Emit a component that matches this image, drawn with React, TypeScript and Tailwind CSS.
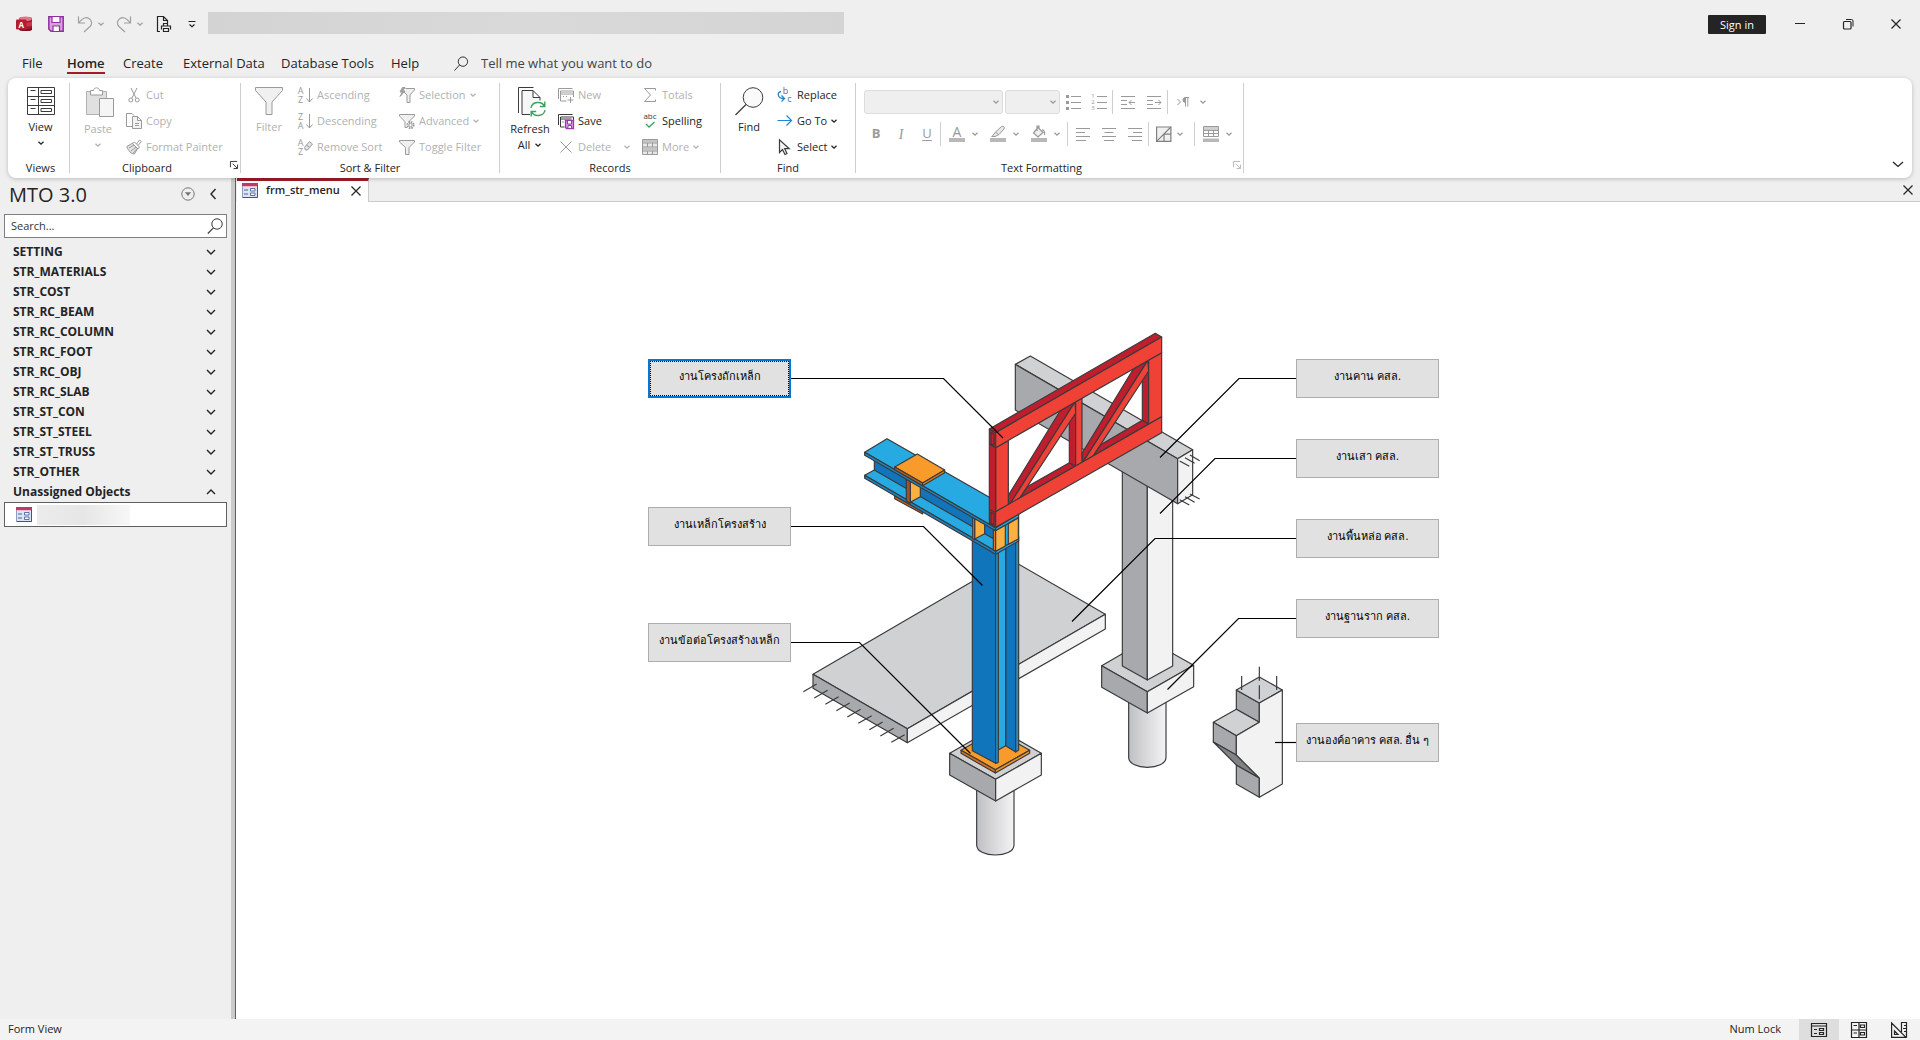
import type { ReactNode } from "react";

type IconProps = { children: ReactNode; size?: string; box?: string };

function Icon({ children, size = "h-4 w-4", box = "0 0 16 16" }: IconProps) {
  return (
    <svg viewBox={box} className={`shrink-0 overflow-visible ${size}`} fill="none" stroke="currentColor" strokeWidth="1" aria-hidden="true">
      {children}
    </svg>
  );
}

function Letter({ x, y, size = 9, fill = "currentColor", children }: { x: number; y: number; size?: number; fill?: string; children: string }) {
  return (
    <text x={x} y={y} textAnchor="middle" fontSize={size} fill={fill} stroke="none">
      {children}
    </text>
  );
}

function Caret({ className = "" }: { className?: string }) {
  return (
    <svg viewBox="0 0 8 8" className={`h-2 w-2 shrink-0 ${className}`} fill="none" stroke="currentColor" strokeWidth="1.3" aria-hidden="true">
      <path d="M1.500 2.700 4 5.200 6.500 2.700" />
    </svg>
  );
}

function Close({ size = "h-3 w-3" }: { size?: string }) {
  return (
    <Icon size={size} box="0 0 12 12">
      <path d="M1.500 1.500l9 9M10.500 1.500l-9 9" strokeWidth="1.2" />
    </Icon>
  );
}

const gray = "#9a9a9a";

const icons = {
  cut: (
    <Icon>
      <path d="M5 1l5 10M11 1L6 11" />
      <circle cx="4.800" cy="13" r="2" />
      <circle cx="11.200" cy="13" r="2" />
    </Icon>
  ),
  copy: (
    <Icon>
      <path d="M6 13.500H.5V.5H6l2 2" />
      <path d="M6.500 3.500h5l4 4v8h-9zM11.500 3.500v4h4M9 10.500h4M9 12.500h4" fill="#f3f3f3" />
    </Icon>
  ),
  painter: (
    <Icon>
      <path d="M.8 7.500l6-3.500 5 5.500-3.500 5.500c-3 0-6-3-7.500-7.500z" fill="#e4e4e4" />
      <path d="M6.500 4.500l2-1.500 5 5-1.500 2zM10.500 5l3-4 1.800 1.500-3.300 4" fill="#fff" />
      <path d="M3 9l5-3M5 12l5-4M7 14.500l4-5" />
    </Icon>
  ),
  asc: (
    <Icon>
      <Letter x={3.5} y={7}>A</Letter>
      <Letter x={3.5} y={16}>Z</Letter>
      <path d="M12.500 1v14M9.500 11.500l3 3.500 3-3.500" />
    </Icon>
  ),
  desc: (
    <Icon>
      <Letter x={3.5} y={7}>Z</Letter>
      <Letter x={3.5} y={16}>A</Letter>
      <path d="M12.500 1v14M9.500 11.500l3 3.500 3-3.500" />
    </Icon>
  ),
  removeSort: (
    <Icon>
      <Letter x={3.5} y={7}>A</Letter>
      <Letter x={3.5} y={16}>Z</Letter>
      <path d="M7.500 8.500l5-6 3 2.500-5 6h-2zM9.500 6l3.200 2.500" fill="#e4e4e4" />
    </Icon>
  ),
  selection: (
    <Icon>
      <path d="M6.500 1.500h9v1.500l-4.500 5v7.500h-3V8L5 5" fill="#f0f0f0" />
      <path d="M3.500.5L1 5h2.500L1 9.500 6 4H3.700L6 .5z" fill="#a5a5a5" />
    </Icon>
  ),
  advanced: (
    <Icon>
      <path d="M.5 1.500h15v1.500l-5 5v3M.5 1.500V3l5.500 5.500v6h2" fill="#f0f0f0" />
      <circle cx="11.500" cy="12" r="3.200" strokeWidth="1.800" strokeDasharray="1.600 .9" />
      <circle cx="11.500" cy="12" r="1.700" />
    </Icon>
  ),
  toggle: (
    <Icon>
      <path d="M.5 1.500h15v1.500L10 8.500v7H6.500v-7L.5 3z" fill="#f0f0f0" />
    </Icon>
  ),
  newRecord: (
    <Icon>
      <path d="M.5 12V1.500h14M8.500 14h-6V4h13v6M2.500 7h13M5 9.500h1M8 9.500h1M12.500 10v6M9.500 13h6" />
      <path d="M3 5.500h12" strokeWidth="2" stroke="#cfcfcf" />
    </Icon>
  ),
  saveRecord: (
    <Icon>
      <path d="M.5 12V1.500h14M6.500 14h-4V4h13v3M2.500 6h11M4.500 9h1" stroke="#3b3b3b" />
      <path d="M7.500 7.500h8v8h-7l-1-1z" stroke="#9b3bab" fill="#d9a0df" strokeWidth="1.300" />
      <path d="M9.500 8v3h4V8M10 15v-2.500h3.500V15" stroke="#9b3bab" fill="#fff" />
    </Icon>
  ),
  deleteRecord: (
    <Icon>
      <path d="M2.500 2.500l11 11M13.500 2.500l-11 11" />
    </Icon>
  ),
  totals: (
    <Icon>
      <path d="M13.500 3.500v-2h-11l6 6.500-6 6.500h11v-2" />
    </Icon>
  ),
  spelling: (
    <Icon>
      <Letter x={8} y={6} size={8} fill="#3b3b3b">abc</Letter>
      <path d="M4 11l3 3 5.500-5" stroke="#37a35c" strokeWidth="1.300" />
    </Icon>
  ),
  more: (
    <Icon>
      <path d="M.5 .5h15v15H.5z" fill="#e6e6e6" />
      <path d="M1 2.300h14M1 10h14" strokeWidth="2.600" stroke="#c4c4c4" />
      <path d="M.5 4h15M.5 8h15M.5 12h15M5.500 4v4M10.500 4v4M5.500 12v3.500M10.500 12v3.500" />
    </Icon>
  ),
  replace: (
    <Icon>
      <Letter x={8.5} y={7} fill="#9b3bab">b</Letter>
      <Letter x={12.5} y={15} fill="#1f86d0">c</Letter>
      <path d="M4 4.500c-4 1-4 7 3 7M4.500 8.500l3 3-3 3" stroke="#1f86d0" strokeWidth="1.300" />
    </Icon>
  ),
  goTo: (
    <Icon>
      <path d="M.5 7.500h14M9.500 2.500l5 5-5 5" stroke="#1f86d0" strokeWidth="1.200" />
    </Icon>
  ),
  select: (
    <Icon>
      <path d="M2.500.8v12.700l3-3 2.500 5 2-1-2.300-4.800h4.500z" fill="#f5f5f5" stroke="#3b3b3b" strokeWidth="1.200" />
    </Icon>
  ),
};

type CmdProps = { icon: ReactNode; label: string; caret?: boolean; off?: boolean; farCaret?: boolean };

function Cmd({ icon, label, caret, off, farCaret }: CmdProps) {
  return (
    <button disabled={off} className={`flex h-[26px] items-center gap-1 whitespace-nowrap text-left ${off ? "text-[#b1b1b1]" : "text-[#242424]"}`}>
      <span className={off ? "text-[#9a9a9a]" : ""}>{icon}</span>
      <span>{label}</span>
      {caret && <Caret className={farCaret ? "ml-2" : "-ml-px"} />}
    </button>
  );
}

function BigCmd({ icon, label, off, children, width }: { icon: ReactNode; label: string; off?: boolean; children?: ReactNode; width: string }) {
  return (
    <button disabled={off} className={`flex flex-col items-center pt-[5px] ${width} ${off ? "text-[#b1b1b1]" : "text-[#242424]"}`}>
      {icon}
      <span className="mt-1 flex h-4 items-center">{label}</span>
      <span className="flex h-4 items-center gap-1">{children}</span>
    </button>
  );
}

function Launcher({ className }: { className: string }) {
  return (
    <button aria-label="More options" className={`absolute right-[2px] bottom-[4px] ${className}`}>
      <Icon size="h-2 w-2" box="0 0 9 9">
        <path d="M.5 7V.5H8M3 3l5 5M8.500 4v4.500H4" />
      </Icon>
    </button>
  );
}

function Group({ title, width, children }: { title: string; width: string; children: ReactNode }) {
  return (
    <section className={`relative my-[5px] flex shrink-0 flex-col border-r border-[#cfcfcf] ${width}`}>
      <div className="-mt-px flex h-[78px]">{children}</div>
      <h2 className={`h-3 text-center leading-4 ${title === "Clipboard" || title === "Text Formatting" ? "pr-4" : ""}`}>{title}</h2>
    </section>
  );
}

function Sep() {
  return <span className="h-6 w-px shrink-0 bg-[#cfcfcf]" />;
}

function Tool({ label, width, children }: { label: string; width: string; children: ReactNode }) {
  return (
    <button disabled aria-label={label} className={`flex h-6 shrink-0 items-center justify-center text-[#9a9a9a] ${width}`}>
      {children}
    </button>
  );
}

function Lines({ d }: { d: string }) {
  return (
    <Icon>
      <path d={d} />
    </Icon>
  );
}

function TitleBar() {
  return (
    <header className="flex h-12 items-center pl-4 text-[#242424]">
      <svg viewBox="0 0 16 16" className="h-4 w-4" aria-hidden="true">
        <path d="M3 2.500C3 .6 16 .6 16 2.500v11c0 1.900-13 1.900-13 0z" fill="#a4192b" />
        <ellipse cx="9.500" cy="2.800" rx="6.500" ry="2.300" fill="#e0788a" />
        <path d="M9 6.500c4 0 7-.5 7-1.500v4c0 1-3 1.500-7 1.500z" fill="#c9354a" />
        <path d="M3 12.500c2 1.500 11 1.500 13-1v2c0 2-13 2-13 0z" fill="#7c0f1d" />
        <rect x="0" y="3.500" width="10.500" height="10" rx="1" fill="#b01e30" />
        <text x="5.250" y="11.500" textAnchor="middle" fontSize="8" fontWeight="700" fill="#fff">A</text>
      </svg>
      <button aria-label="Save" className="ml-4">
        <Icon>
          <path d="M.8.8h14.400v14.400H3L.8 13z" stroke="#9030a0" fill="#d9a0df" strokeWidth="1.500" />
          <path d="M4 1v5.500h8V1M5 15v-5h6.500v5" stroke="#9030a0" fill="#fff" strokeWidth="1.200" />
        </Icon>
      </button>
      <button aria-label="Undo" disabled className="ml-[13px] flex items-center gap-1 text-[#a0a0a0]">
        <Icon>
          <path d="M1.500.5v6.500h6.500M2 6.500C5 2.500 9 .5 12 2.500s3.500 5.500 1 8l-6 5.500" strokeWidth="1.200" />
        </Icon>
        <Caret />
      </button>
      <button aria-label="Redo" disabled className="ml-[11px] flex items-center gap-1 text-[#a0a0a0]">
        <Icon>
          <path d="M14.500.5v6.500H8M14 6.500C11 2.500 7 .5 4 2.500s-3.500 5.500-1 8l6 5.500" strokeWidth="1.200" />
        </Icon>
        <Caret />
      </button>
      <button aria-label="Print preview" className="ml-3">
        <Icon>
          <path d="M4 15.500H1.500V.5h6l4 4V7M7.500.5v4h4" strokeWidth="1.200" />
          <path d="M7.500 10V7.500h4V10M5.500 13.500v-3.500h9v3.500M7.500 12.500h5v3h-5z" strokeWidth="1.200" />
        </Icon>
      </button>
      <button aria-label="Customize toolbar" className="ml-3">
        <Icon>
          <path d="M4.500 5.500h7M5.500 8.500l2.500 2.300 2.500-2.300" strokeWidth="1.200" />
        </Icon>
      </button>
      <div className="mb-[2px] ml-2 h-[22px] w-[636px] bg-linear-to-r from-[#d3d3d3] via-[#d9d9d9] to-[#d4d4d4]" />
      <div className="ml-auto flex items-center">
        <button className="mr-[10px] h-[19px] w-[58px] rounded-[1px] bg-[#242424] text-[11px] leading-[19px] text-white">Sign in</button>
        <button aria-label="Minimize" className="flex h-12 w-12 items-center justify-center">
          <Icon size="h-3 w-3" box="0 0 12 12"><path d="M1 5.500h10" /></Icon>
        </button>
        <button aria-label="Restore" className="flex h-12 w-12 items-center justify-center">
          <Icon size="h-3 w-3" box="0 0 12 12">
            <rect x="1.500" y="3.500" width="7.500" height="7.500" rx="1" strokeWidth="1.200" />
            <path d="M4 1.500h5.500a1.500 1.500 0 011.500 1.500v5.500" />
          </Icon>
        </button>
        <button aria-label="Close" className="flex h-12 w-12 items-center justify-center">
          <Close />
        </button>
      </div>
    </header>
  );
}

const tabs = [
  { name: "File", width: "w-[45px]" },
  { name: "Home", width: "w-[56px]", active: true },
  { name: "Create", width: "w-[60px]" },
  { name: "External Data", width: "w-[98px]" },
  { name: "Database Tools", width: "w-[110px]" },
  { name: "Help", width: "w-[63px]" },
];

function RibbonTabs() {
  return (
    <nav className="flex h-[30px] items-center pt-px pl-[22px] text-[13px] text-[#242424]">
      {tabs.map((t) => (
        <div key={t.name} className={`shrink-0 ${t.width}`}>
          <button className={t.active ? "relative font-semibold whitespace-nowrap after:absolute after:inset-x-0 after:-bottom-px after:h-[2px] after:bg-[#a4192b]" : "whitespace-nowrap"}>
            {t.name}
          </button>
        </div>
      ))}
      <Icon size="h-[15px] w-[15px]">
        <circle cx="9.500" cy="6" r="5" />
        <path d="M6 9.500L.5 15.500" />
      </Icon>
      <input aria-label="Tell me what you want to do" placeholder="Tell me what you want to do" className="ml-3 w-60 bg-transparent outline-none placeholder:text-[#444]" />
    </nav>
  );
}

function Ribbon() {
  return (
    <div className="relative mx-2 flex h-[100px] shrink-0 rounded-lg bg-white text-[11px] text-[#242424] shadow-[0_1px_4px_rgba(0,0,0,0.22)]">
      <Group title="Views" width="w-[62px] pl-1">
        <BigCmd
          label="View"
          width="w-full"
          icon={
            <Icon size="h-7 w-7" box="0 0 28 28">
              <path d="M.5.5h27v27H.5zM.5 9.500h27M.5 18.500h27M11.500.5v27" stroke="#3b3b3b" />
              <path d="M3.500 3.500h5M3.500 12.500h5M3.500 21.500h5M14 3.500h10.500v3H14zM14 12.500h10.500v3H14zM14 21.500h10.500v3H14z" stroke="#3b3b3b" />
            </Icon>
          }
        >
          <Caret />
        </BigCmd>
      </Group>

      <Group title="Clipboard" width="w-[171px]">
        <BigCmd
          off
          label="Paste"
          width="ml-1 w-12"
          icon={
            <Icon size="h-[30px] w-7 ml-1 text-[#9a9a9a]" box="0 0 28 30">
              <path d="M.5 4.500h20V27.500H.5z" fill="#e0e0e0" stroke="#b0b0b0" />
              <path d="M4.500 8V3.500h3c0-3.500 6-3.500 6 0h3V8z" fill="#fff" />
              <path d="M13.500 11.500h14v18h-14z" fill="#f5f5f5" />
            </Icon>
          }
        >
          <Caret />
        </BigCmd>
        <div className="ml-1">
          <Cmd off icon={icons.cut} label="Cut" />
          <Cmd off icon={icons.copy} label="Copy" />
          <Cmd off icon={icons.painter} label="Format Painter" />
        </div>
        <Launcher className="text-[#242424]" />
      </Group>

      <Group title="Sort & Filter" width="w-[259px]">
        <BigCmd
          off
          label="Filter"
          width="ml-1 w-12"
          icon={
            <Icon size="h-7 w-7 text-[#9a9a9a]" box="0 0 28 28">
              <path d="M.5.5h27v3L17 15v12.500h-6V15L.5 3.500z" fill="#f0f0f0" />
            </Icon>
          }
        />
        <div className="ml-1 w-[102px]">
          <Cmd off icon={icons.asc} label="Ascending" />
          <Cmd off icon={icons.desc} label="Descending" />
          <Cmd off icon={icons.removeSort} label="Remove Sort" />
        </div>
        <div>
          <Cmd off caret icon={icons.selection} label="Selection" />
          <Cmd off caret icon={icons.advanced} label="Advanced" />
          <Cmd off icon={icons.toggle} label="Toggle Filter" />
        </div>
      </Group>

      <Group title="Records" width="w-[221px]">
        <BigCmd
          label="Refresh"
          width="ml-[6px] w-12"
          icon={
            <Icon size="ml-1 h-[30px] w-7" box="0 0 28 30">
              <path d="M.5 26V.5h15" stroke="#3b3b3b" />
              <path d="M12 27.500H4V3.500h11l7 7v3M15 3.500v7h7" stroke="#3b3b3b" fill="#f7f7f7" />
              <circle cx="20" cy="22" r="8" fill="#fff" stroke="none" />
              <path d="M13 21c1-6.500 11-7.500 13.500-1.500M26.800 14.500v5h-5M27 23c-1 6.500-11 7.500-13.500 1.500M13.200 29.500v-5h5" stroke="#37a35c" strokeWidth="1.400" />
            </Icon>
          }
        >
          All <Caret />
        </BigCmd>
        <div className="ml-1 w-[84px]">
          <Cmd off icon={icons.newRecord} label="New" />
          <Cmd icon={icons.saveRecord} label="Save" />
          <Cmd off caret farCaret icon={icons.deleteRecord} label="Delete" />
        </div>
        <div>
          <Cmd off icon={icons.totals} label="Totals" />
          <Cmd icon={icons.spelling} label="Spelling" />
          <Cmd off caret icon={icons.more} label="More" />
        </div>
      </Group>

      <Group title="Find" width="w-[135px]">
        <BigCmd
          label="Find"
          width="ml-1 w-12"
          icon={
            <Icon size="h-7 w-7" box="0 0 28 28">
              <circle cx="18" cy="10.500" r="9.800" stroke="#3b3b3b" fill="#fafafa" />
              <path d="M11 17.500L.5 28" stroke="#3b3b3b" strokeWidth="1.300" />
            </Icon>
          }
        />
        <div className="ml-1">
          <Cmd icon={icons.replace} label="Replace" />
          <Cmd caret icon={icons.goTo} label="Go To" />
          <Cmd caret icon={icons.select} label="Select" />
        </div>
      </Group>

      <Group title="Text Formatting" width="w-[388px]">
        <div className="pl-2 text-[#9a9a9a]">
          <div className="mt-2 flex h-6 items-center">
            <button disabled aria-label="Font" className="flex h-6 w-[139px] items-center justify-end rounded-[3px] border border-[#dcdcdc] bg-[#efefef] pr-[2px]"><Caret /></button>
            <button disabled aria-label="Font size" className="ml-[2px] flex h-6 w-[55px] items-center justify-end rounded-[3px] border border-[#dcdcdc] bg-[#efefef] pr-[2px]"><Caret /></button>
            <Tool label="Bullets" width="w-[26px]">
              <Icon>
                <path d="M6 2.500h10M6 8.500h10M6 14.500h10" />
                <path d="M1 1h3v3H1zM1 7h3v3H1zM1 13h3v3H1z" fill={gray} stroke="none" />
              </Icon>
            </Tool>
            <Tool label="Numbering" width="w-[26px]">
              <Icon>
                <path d="M6 2.500h10M6 8.500h10M6 14.500h10" />
                <Letter x={2} y={4} size={6}>1</Letter>
                <Letter x={2} y={10} size={6}>2</Letter>
                <Letter x={2} y={16} size={6}>3</Letter>
              </Icon>
            </Tool>
            <Sep />
            <Tool label="Decrease indent" width="ml-[2px] w-[26px]">
              <Lines d="M1 2.500h14M1 6.500h6M1 10.500h6M1 14.500h14M9 8.500h6M11.500 6L9 8.500l2.500 2.500" />
            </Tool>
            <Tool label="Increase indent" width="w-[26px]">
              <Lines d="M1 2.500h14M1 6.500h6M1 10.500h6M1 14.500h14M9 8.500h6M12.500 6l2.500 2.500-2.500 2.500" />
            </Tool>
            <Sep />
            <Tool label="Text direction" width="ml-1 w-[38px] gap-2">
              <Icon>
                <path d="M2.500 5l3 3-3 3M10.500 3.500v9M12.800 3.500v9M14 3.500H9.500" />
                <path d="M10.500 3.500a2.500 2.500 0 000 5z" fill={gray} />
              </Icon>
              <Caret />
            </Tool>
          </div>
          <div className="mt-2 flex h-6 items-center">
            <Tool label="Bold" width="w-6"><b className="text-[13px]">B</b></Tool>
            <Tool label="Italic" width="w-[26px]"><i className="font-['Liberation_Serif'] text-[14px]">I</i></Tool>
            <Tool label="Underline" width="w-[26px]"><u className="text-[13px] underline-offset-2">U</u></Tool>
            <Sep />
            <Tool label="Font color" width="ml-1 w-[38px] gap-[6px]">
              <Icon>
                <Letter x={8} y={11} size={14}>A</Letter>
                <path d="M0 12h16v4H0z" fill="#b8b8b8" stroke="none" />
              </Icon>
              <Caret />
            </Tool>
            <Tool label="Highlight" width="ml-[3px] w-[38px] gap-[6px]">
              <Icon>
                <path d="M2 10.500l3.500-4.500 6-5.500c2-1 3.500.5 2.500 2.500l-5 5.500-4 2zM5.500 6l3.500 3M1.500 10.500h4" fill="#e8e8e8" />
                <path d="M0 12h16v4H0z" fill="#b8b8b8" stroke="none" />
              </Icon>
              <Caret />
            </Tool>
            <Tool label="Fill" width="ml-[3px] w-[38px] gap-[6px]">
              <Icon>
                <path d="M7 1.500l5 5-5 4.500L2.500 7zM6 5V0h2v2.500M11 4c2-.5 3 2 2.500 5" fill="#f0f0f0" strokeWidth="1.200" />
                <path d="M0 12h16v4H0z" fill="#b8b8b8" stroke="none" />
              </Icon>
              <Caret />
            </Tool>
            <span className="w-[2px]" />
            <Sep />
            <Tool label="Align left" width="ml-[2px] w-[26px]"><Lines d="M1 2.500h14M1 6.500h9M1 10.500h14M1 14.500h10" /></Tool>
            <Tool label="Center" width="w-[26px]"><Lines d="M1 2.500h14M3.500 6.500h9M1 10.500h14M3 14.500h10" /></Tool>
            <Tool label="Align right" width="w-[26px]"><Lines d="M1 2.500h14M6 6.500h9M1 10.500h14M5 14.500h10" /></Tool>
            <Sep />
            <Tool label="Gridlines" width="ml-[5px] w-[32px] gap-1">
              <Icon>
                <path d="M.6 1h14.300v14.300H.6z" fill="#f0f0f0" strokeWidth="1.200" stroke="#808080" />
                <path d="M.6 15.300L14.900 1M8 8.200v7M8 8.200h7" strokeWidth="1.200" stroke="#808080" />
              </Icon>
              <Caret />
            </Tool>
            <span className="w-2" />
            <Sep />
            <Tool label="Alternate row color" width="ml-1 w-[38px] gap-[6px]">
              <Icon>
                <path d="M.5.5h15v10H.5zM.5 4.500h15M.5 7.500h15M5.500 4v6M10.500 4v6" />
                <path d="M1 1h14v3H1z" fill="#cfcfcf" stroke="none" />
                <path d="M0 12.500h16V16H0z" fill="#b8b8b8" stroke="none" />
              </Icon>
              <Caret />
            </Tool>
          </div>
        </div>
        <Launcher className="text-[#b1b1b1]" />
      </Group>
      <button aria-label="Collapse ribbon" className="mt-auto mr-2 mb-2 ml-auto">
        <Icon size="h-3 w-3" box="0 0 12 12"><path d="M1 4l5 4.500L11 4" strokeWidth="1.300" /></Icon>
      </button>
    </div>
  );
}

function FormIcon() {
  return (
    <svg viewBox="0 0 16 15" className="h-[15px] w-4 shrink-0" aria-hidden="true">
      <rect x=".5" y=".5" width="15" height="14" fill="#dbe4f5" stroke="#8c9dc4" />
      <path d="M0 0h16v3H0z" fill="#c0386a" />
      <path d="M1 3.500h14" stroke="#f2b8c8" />
      <path d="M15.500 3v11.500H1" stroke="#3f5585" fill="none" />
      <path d="M2 7h4M2 11h4" stroke="#4f6597" />
      <path d="M8.500 5.500h4.500v2.500H8.500zM8.500 10h4.500v2.500H8.500z" stroke="#5a70a5" fill="#fff" />
    </svg>
  );
}

const groups = [
  "SETTING",
  "STR_MATERIALS",
  "STR_COST",
  "STR_RC_BEAM",
  "STR_RC_COLUMN",
  "STR_RC_FOOT",
  "STR_RC_OBJ",
  "STR_RC_SLAB",
  "STR_ST_CON",
  "STR_ST_STEEL",
  "STR_ST_TRUSS",
  "STR_OTHER",
  "Unassigned Objects",
];

function Sidebar() {
  return (
    <aside className="flex w-[236px] shrink-0 flex-col border-r border-[#5f5f5f] text-[#242424]">
      <div className="flex-1 border-r-4 border-[#cacaca] pr-1 pl-1">
        <div className="flex h-9 items-center pr-2 pb-[2px] pl-[5px]">
          <h1 className="flex-1 text-[20px] leading-6">MTO 3.0</h1>
          <button aria-label="Navigation menu" className="mb-[2px] text-[#767676]">
            <Icon size="h-[14px] w-[14px]" box="0 0 14 14">
              <circle cx="7" cy="7" r="6.200" />
              <path d="M3.800 5.300h6.400L7 9z" fill="currentColor" stroke="none" />
            </Icon>
          </button>
          <button aria-label="Collapse pane" className="mb-[2px] ml-3">
            <Icon size="h-3 w-3" box="0 0 12 12"><path d="M8.500 1L4 6l4.500 5" strokeWidth="1.400" /></Icon>
          </button>
        </div>
        <div className="flex h-6 items-center border border-[#7f7f7f] bg-white pr-[3px] pl-[6px]">
          <input aria-label="Search" placeholder="Search..." className="min-w-0 flex-1 text-[11px] outline-none placeholder:text-[#333]" />
          <Icon>
            <circle cx="10" cy="6" r="5.200" stroke="#3b3b3b" />
            <path d="M6.500 9.800L.8 15.500" stroke="#3b3b3b" strokeWidth="1.200" />
          </Icon>
        </div>
        <ul className="mt-1">
          {groups.map((name, i) => (
            <li key={name}>
              <button className="flex h-5 w-full items-center justify-between pr-[11px] pb-px pl-[9px] text-[12px] font-bold">
                {name}
                <Icon size="h-[10px] w-[10px]" box="0 0 10 10">
                  <path d={i === groups.length - 1 ? "M1 7l4-4 4 4" : "M1 3l4 4 4-4"} strokeWidth="1.400" />
                </Icon>
              </button>
            </li>
          ))}
        </ul>
        <div className="flex h-[25px] items-center border border-[#5f5f5f] bg-white pl-[11px]">
          <FormIcon />
          <div className="ml-[5px] h-5 w-[93px] bg-linear-to-r from-[#ececec] via-[#e6e6e6] to-[#f7f7f7]" />
        </div>
      </div>
    </aside>
  );
}

type Node = { label: string; place: string; focused?: boolean };

const nodes: Node[] = [
  { label: "งานโครงถักเหล็ก", place: "left-0 top-[29px]", focused: true },
  { label: "งานเหล็กโครงสร้าง", place: "left-0 top-[177px]" },
  { label: "งานข้อต่อโครงสร้างเหล็ก", place: "left-0 top-[293px]" },
  { label: "งานคาน คสล.", place: "right-0 top-[29px]" },
  { label: "งานเสา คสล.", place: "right-0 top-[109px]" },
  { label: "งานพื้นหล่อ คสล.", place: "right-0 top-[189px]" },
  { label: "งานฐานราก คสล.", place: "right-0 top-[269px]" },
  { label: "งานองค์อาคาร คสล. อื่น ๆ", place: "right-0 top-[393px]" },
];

const concrete = { top: "#d0d1d3", left: "#a7a9ac", right: "#f2f2f2" };
const steel = { dark: "#1175bc", light: "#27a9e1" };
const red = { dark: "#be1e2d", light: "#ef4136" };

// Each part is drawn at three times its size and scaled down by its group.
const third = "scale(0.33333)";

function Poly({ p, f }: { p: string; f: string }) {
  return <polygon points={p} fill={f} />;
}

function Drawing() {
  return (
    <svg viewBox="0 0 792 540" className="h-[540px] w-[792px]" fill="none" role="img" aria-label="Structure parts">
      <defs>
        <linearGradient id="pile">
          <stop offset="0" stopColor="#bfc0c3" />
          <stop offset="1" stopColor="#f4f4f5" />
        </linearGradient>
      </defs>
      <g stroke="#3a3a3c" strokeWidth="3.500" strokeLinejoin="round">
        {/* slab, left footing and steel column */}
        <g transform={`translate(132 210) ${third}`}>
          <Poly p="99,403 691,58 976,223 382,566" f={concrete.top} />
          <Poly p="99,403 382,566 382,608 99,445" f={concrete.left} />
          <Poly p="382,566 976,223 976,267 382,608" f={concrete.right} />
          {[0, 1, 2, 3, 4, 5, 6, 7, 8].map((i) => (
            <path key={i} d={`M${70 + i * 33} ${455 + i * 19}l40 -23`} />
          ))}
          <path d="M590 730V915C590 955 702 955 702 915V730z" fill="url(#pile)" />
          <Poly p="509,640 647,561 784,640 647,718" f={concrete.top} />
          <Poly p="509,640 647,718 647,783 509,705" f={concrete.left} />
          <Poly p="647,718 784,640 784,705 647,783" f={concrete.right} />
          <Poly p="543,631 646,572 749,631 646,689" f="#f99b2a" />
          <Poly p="543,631 646,689 646,699 543,640" f="#d9721e" />
          <Poly p="646,689 749,631 749,640 646,699" f="#f0901f" />
          <Poly p="677,-10 707,-10 707,636 677,617" f={steel.dark} />
          <Poly p="655,-10 677,-10 677,617 655,630" f={steel.light} />
          <Poly p="707,-10 716,-10 716,630 707,636" f="#2a8fc4" />
          <Poly p="577,-10 647,-10 647,670 577,632" f={steel.dark} />
          <Poly p="647,-10 655,-10 655,667 647,670" f="#1c94d2" />
        </g>
        {/* right column and footing */}
        <g transform={`translate(432 270) ${third}`}>
          <path d="M146 290V472C146 512 258 512 258 472V290z" fill="url(#pile)" />
          <Poly p="65,197 202,118 341,196 202,275" f={concrete.top} />
          <Poly p="65,197 202,275 202,339 65,262" f={concrete.left} />
          <Poly p="202,275 341,196 341,260 202,339" f={concrete.right} />
          <Poly p="127,-440 202,-440 202,240 127,198" f={concrete.left} />
          <Poly p="202,-440 278,-440 278,198 202,240" f={concrete.right} />
        </g>
        {/* concrete beam */}
        <g transform={`translate(312 -20) ${third}`}>
          <Poly p="166,163 211,138 698,419 653,446" f={concrete.top} />
          <Poly p="166,163 653,446 653,581 166,300" f={concrete.left} />
          <Poly p="653,446 698,419 698,554 653,581" f={concrete.right} />
          <path d="M690 435l29 17M675 443l29 17M659 453l29 16M690 552l29 15M675 560l29 17M659 569l29 16" />
        </g>
        {/* steel beam */}
        <g transform={`translate(-8 -10) ${third}`}>
          <Poly p="764,527 848,575 848,582 764,536" f="#c8641e" />
          <Poly p="703,415 1067,626 1067,664 703,453" f={steel.dark} />
          <Poly p="674,466 703,450 1067,660 1067,694" f={steel.light} />
          <Poly p="674,466 1067,694 1067,703 674,475" f="#1c86c4" />
          <Poly p="811,482 841,500 841,530 811,547" f="#fbb040" />
          <Poly p="799,474 811,482 811,550 799,543" f="#a9501c" />
          <Poly p="1004,595 1034,612 1034,641 1004,657" f="#fbb040" />
          <Poly p="998,592 1004,595 1004,659 998,656" f="#e07a22" />
          <Poly p="674,397 741,356 1136,582 1067,624" f={steel.light} />
          <Poly p="674,397 1067,624 1067,632 674,406" f="#1c86c4" />
          <Poly p="1067,624 1136,582 1136,663 1067,703" f={steel.light} />
          <path d="M1067 632L1136 592M1067 694L1136 655" />
          <Poly p="1060,629 1067,632 1067,694 1060,690" f="#e07a22" />
          <Poly p="1067,632 1096,616 1096,678 1067,694" f="#fbb040" />
          <Poly p="1105,611 1135,594 1135,657 1105,673" f="#fbb040" />
          <Poly p="764,441 832,402 914,450 848,489" f="#f99b2a" />
          <Poly p="764,441 848,489 848,497 764,449" f="#b9601f" />
          <Poly p="848,489 914,450 914,458 848,497" f="#d9801f" />
        </g>
        {/* truss */}
        <g transform={`translate(312 -20) ${third}`}>
          <Poly p="180,563 205,528 328,458 347,469" f={red.dark} />
          <Poly p="400,437 422,404 547,331 566,342" f={red.dark} />
          <Poly p="547,161 566,150 566,342 547,331" f={red.dark} />
          <Poly p="328,286 347,275 347,469 328,458" f={red.dark} />
          <Poly p="145,556 302,300 345,276 150,582 145,584" f={red.dark} />
          <Poly p="150,582 345,276 347,309 180,563" f={red.light} />
          <Poly p="347,275 366,264 366,458 347,469" f={red.light} />
          <Poly p="366,430 520,177 563,152 368,458" f={red.dark} />
          <Poly p="368,458 563,152 566,183 400,437" f={red.light} />
          <Poly p="566,150 605,128 605,320 566,342" f={red.light} />
          <Poly p="107,413 145,392 145,584 107,605" f={red.light} />
          <Poly p="88,357 107,368 107,652 88,640" f={red.dark} />
          <Poly p="88,357 586,70 605,81 107,368" f={red.dark} />
          <Poly p="107,368 605,81 605,128 107,413" f={red.light} />
          <Poly p="107,605 605,320 605,368 107,652" f={red.light} />
          <path d="M88 402l19 11M88 598l19 10M93 367v34l9 5v-33zM93 607v33l9 5v-33z" />
        </g>
        {/* corbel */}
        <g transform={`translate(432 270) ${third}`}>
          <Poly p="469,270 538,309 538,367 469,328" f={concrete.left} />
          <Poly p="469,270 538,231 607,270 538,309" f={concrete.top} />
          <Poly p="400,367 469,328 538,367 469,407" f={concrete.top} />
          <Poly p="400,367 469,407 469,465 400,426" f={concrete.left} />
          <Poly p="469,495 538,534 538,592 469,552" f={concrete.left} />
          <Poly p="400,426 469,465 538,534 469,495" f="#808285" />
          <Poly p="538,309 607,270 607,552 538,592 538,534 469,465 469,407 538,367" f={concrete.right} />
          <path d="M485 228v42M538 200v42M590 228v42M538 256v42" />
        </g>
      </g>
      {/* leader lines */}
      <g stroke="#000" strokeWidth="1.200">
        <path d="M143 48.500H295.500L355 108" />
        <path d="M143 196.500H275.500L334.500 255.500" />
        <path d="M143 312.500H211.500L322.500 423.500" />
        <path d="M648 48.500H591L512 127.500" />
        <path d="M648 128.500H567L512 183.500" />
        <path d="M648 208.500H507L424 291.500" />
        <path d="M648 288.500H590.500L519.500 359.500" />
        <path d="M648 412.500H627" />
      </g>
    </svg>
  );
}

function FormArea() {
  return (
    <main className="flex min-w-0 flex-1 flex-col bg-white">
      <div className="flex h-6 shrink-0 items-stretch bg-[#efefef] text-[#242424]">
        <div className="ml-px flex w-[132px] items-center border-t-[3px] border-r border-t-[#a4192b] border-r-[#cacaca] bg-white pb-[2px] pl-[5px]">
          <FormIcon />
          <span className="ml-2 flex-1 text-[11px] font-semibold">frm_str_menu</span>
          <button aria-label="Close tab" className="mr-[6px]"><Close /></button>
        </div>
        <div className="flex flex-1 items-center justify-end border-b border-[#cacaca] pr-[6px]">
          <button aria-label="Close form"><Close /></button>
        </div>
      </div>
      <div className="flex-1 overflow-hidden pt-32 pl-[412px]">
        <div className="relative w-[791px]">
          <Drawing />
          {nodes.map((n) => (
            <button
              key={n.label}
              className={`absolute h-[39px] w-[143px] bg-[#e1e1e1] pb-1 text-[11px] whitespace-nowrap text-black ${n.place} ${n.focused ? "border-2 border-[#0078d7] outline-1 -outline-offset-3 outline-dotted outline-black" : "border border-[#adadad]"}`}
            >
              {n.label}
            </button>
          ))}
        </div>
      </div>
    </main>
  );
}

function StatusBar() {
  return (
    <footer className="flex h-[21px] shrink-0 items-center bg-[#f3f3f3] pr-px pl-2 text-[11px] text-[#242424]">
      <span className="flex-1">Form View</span>
      <span className="mr-[18px]">Num Lock</span>
      <button aria-label="Form view" className="flex h-[21px] w-10 items-center justify-center bg-[#dedede]">
        <Icon><path d="M.5 1.500h15v13H.5zM.5 4h15M3 7.500h3M3 11.500h3M8.500 6.500h4v2h-4zM8.500 10.500h4v2h-4z" strokeWidth="1.200" /></Icon>
      </button>
      <button aria-label="Layout view" className="flex h-[21px] w-10 items-center justify-center">
        <Icon><path d="M.5.5h15v15H.5zM.5 8h15M8 .5v15M2.500 3.500h3.500M2.500 11h3.500M9.500 3h4v2.500h-4zM9.500 10.500h4V13h-4z" strokeWidth="1.200" /></Icon>
      </button>
      <button aria-label="Design view" className="flex h-[21px] w-10 items-center justify-center">
        <Icon><path d="M.6 1v14.400H15zM3.500 9v3.500H7zM10.500 10V.5h5v14.500M13 3.500h2M12 6.500h3M13 9.500h2" strokeWidth="1.200" /></Icon>
      </button>
    </footer>
  );
}

export default function App() {
  return (
    <div className="flex h-screen flex-col overflow-hidden bg-[#efefef] font-['Open_Sans','Noto_Sans',sans-serif]">
      <TitleBar />
      <RibbonTabs />
      <Ribbon />
      <div className="flex min-h-0 flex-1">
        <Sidebar />
        <FormArea />
      </div>
      <StatusBar />
    </div>
  );
}
